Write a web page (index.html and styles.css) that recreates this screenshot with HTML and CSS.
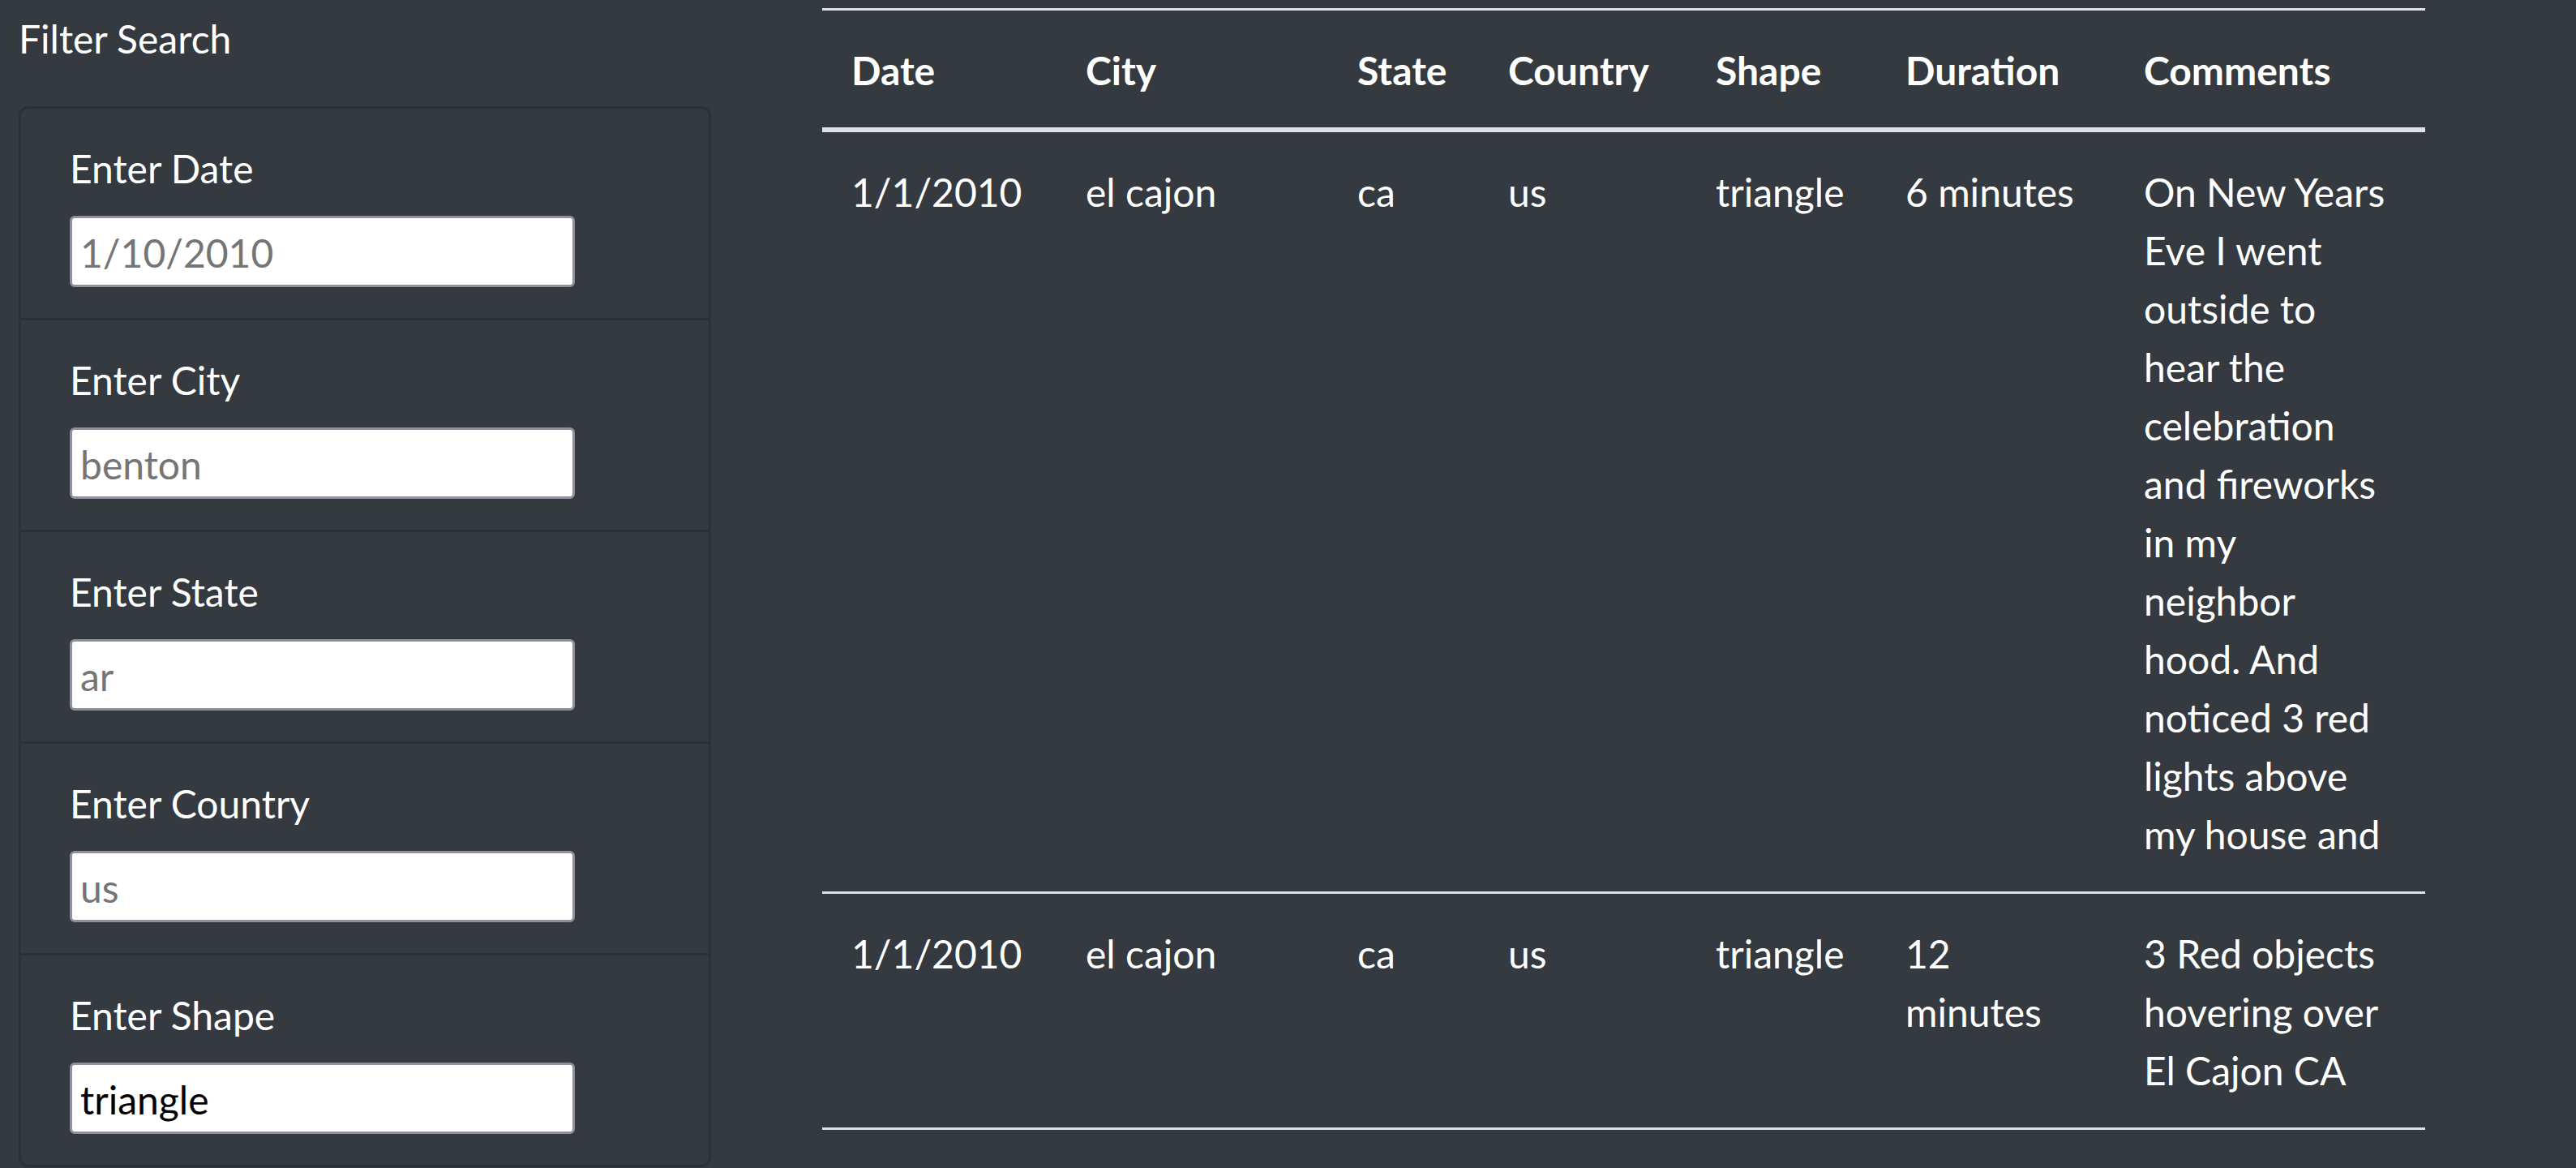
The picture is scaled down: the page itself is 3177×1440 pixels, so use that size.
FILE: index.html
```html
<!DOCTYPE html>
<html lang="en">
<head>
<meta charset="utf-8">
<title>UFO Sightings</title>
<link rel="stylesheet" href="styles.css">
</head>
<body>
<div class="page">
  <aside class="filters">
    <div class="filters-title">Filter Search</div>
    <ul class="filter-list">
      <li class="filter-item">
        <label class="filter-label" for="datetime">Enter Date</label>
        <input class="filter-input" id="datetime" type="text" placeholder="1/10/2010">
      </li>
      <li class="filter-item">
        <label class="filter-label" for="city">Enter City</label>
        <input class="filter-input" id="city" type="text" placeholder="benton">
      </li>
      <li class="filter-item">
        <label class="filter-label" for="state">Enter State</label>
        <input class="filter-input" id="state" type="text" placeholder="ar">
      </li>
      <li class="filter-item">
        <label class="filter-label" for="country">Enter Country</label>
        <input class="filter-input" id="country" type="text" placeholder="us">
      </li>
      <li class="filter-item">
        <label class="filter-label" for="shape">Enter Shape</label>
        <input class="filter-input" id="shape" type="text" placeholder="triangle" value="triangle">
      </li>
    </ul>
  </aside>
  <main class="results">
    <table class="ufo-table">
      <colgroup>
        <col class="col-date">
        <col class="col-city">
        <col class="col-state">
        <col class="col-country">
        <col class="col-shape">
        <col class="col-duration">
        <col class="col-comments">
      </colgroup>
      <thead>
        <tr>
          <th>Date</th>
          <th>City</th>
          <th>State</th>
          <th>Country</th>
          <th>Shape</th>
          <th>Duration</th>
          <th>Comments</th>
        </tr>
      </thead>
      <tbody>
        <tr>
          <td>1/1/2010</td>
          <td>el cajon</td>
          <td>ca</td>
          <td>us</td>
          <td>triangle</td>
          <td>6 minutes</td>
          <td>On New Years Eve I went outside to hear the celebration and fireworks in my neighbor hood. And noticed 3 red lights above my house and</td>
        </tr>
        <tr>
          <td>1/1/2010</td>
          <td>el cajon</td>
          <td>ca</td>
          <td>us</td>
          <td>triangle</td>
          <td>12 minutes</td>
          <td>3 Red objects hovering over El Cajon CA</td>
        </tr>
      </tbody>
    </table>
  </main>
</div>
</body>
</html>
```

FILE: styles.css
```css
* {
  box-sizing: border-box;
}

html, body {
  margin: 0;
  height: 100%;
  overflow: hidden;
}

body {
  background: #343a40;
  color: #ffffff;
  font-family: "Lato", "Open Sans", sans-serif;
  font-size: 48px;
  line-height: 72px;
}

.page {
  display: flex;
  align-items: flex-start;
  padding: 10px 0 0 23px;
}

.filters {
  width: 854px;
  flex: none;
}

.filters-title {
  padding-top: 2px;
  margin-bottom: 47px;
}

.filter-list {
  list-style: none;
  margin: 0;
  padding: 0;
  border: 3px solid rgba(0, 0, 0, 0.14);
  border-radius: 12px;
}

.filter-item {
  padding: 36px 60px 38px 60px;
}

.filter-item + .filter-item {
  border-top: 3px solid rgba(0, 0, 0, 0.14);
}

.filter-label {
  display: block;
  padding-top: 2px;
  margin-bottom: 22px;
}

.filter-input {
  display: block;
  width: 623px;
  height: 88px;
  margin: 0;
  padding: 2px 10px 0 10px;
  border: 3px solid #8f8f9d;
  border-radius: 6px;
  background: #ffffff;
  color: #000000;
  font-family: inherit;
  font-size: 48px;
  outline: none;
}

.filter-input::placeholder {
  color: #757575;
  opacity: 1;
}

.results {
  margin-left: 137px;
  flex: none;
}

.ufo-table {
  width: 1977px;
  table-layout: fixed;
  border-collapse: collapse;
}

.col-date { width: 289px; }
.col-city { width: 335px; }
.col-state { width: 186px; }
.col-country { width: 256px; }
.col-shape { width: 234px; }
.col-duration { width: 294px; }
.col-comments { width: 383px; }

.ufo-table th,
.ufo-table td {
  padding: 38px 36px 34px 36px;
  text-align: left;
  vertical-align: top;
  border-top: 3px solid #dee2e6;
}

.ufo-table th {
  font-weight: 700;
  border-bottom: 6px solid #dee2e6;
}

.ufo-table tbody tr:last-child td {
  border-bottom: 3px solid #dee2e6;
}
```
